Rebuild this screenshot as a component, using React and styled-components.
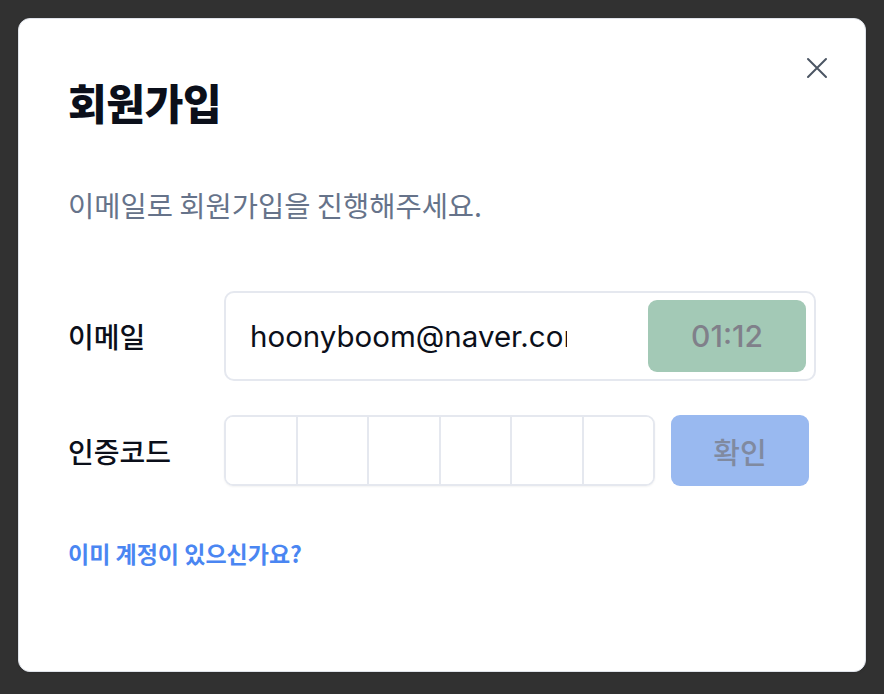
import React from 'react';
import styled, { createGlobalStyle } from 'styled-components';

const GlobalStyle = createGlobalStyle`
  html, body {
    margin: 0;
    padding: 0;
    background: #313131;
  }
  * {
    box-sizing: border-box;
  }
  body {
    font-family: Inter, "Noto Sans CJK KR", sans-serif;
  }
`;

const Backdrop = styled.div`
  min-height: 694px;
  padding: 18px;
`;

const Modal = styled.div`
  position: relative;
  width: 848px;
  height: 654px;
  background: #ffffff;
  border: 1px solid #dfe3ea;
  border-radius: 12px;
  padding: 57px 49px 0 49px;
  box-shadow: 0 1px 3px rgba(0, 0, 0, 0.08);
`;

const CloseButton = styled.button`
  position: absolute;
  top: 34px;
  right: 33px;
  width: 30px;
  height: 30px;
  padding: 0;
  border: none;
  background: transparent;
  display: flex;
  align-items: center;
  justify-content: center;
  cursor: pointer;
  color: #4b5563;
`;

const Title = styled.h2`
  margin: 0;
  font-family: "Noto Sans CJK KR", sans-serif;
  font-size: 42px;
  line-height: 52px;
  font-weight: 800;
  color: #0b0f1a;
  letter-spacing: -0.3px;
`;

const Subtitle = styled.p`
  margin: 59px 0 0;
  font-family: "Noto Sans CJK KR", sans-serif;
  font-size: 28.5px;
  line-height: 36px;
  font-weight: 400;
  color: #66738a;
`;

const Form = styled.div`
  margin-top: 68px;
  display: flex;
  flex-direction: column;
  gap: 34px;
`;

const Row = styled.div`
  display: flex;
  align-items: center;
`;

const Label = styled.label`
  width: 156px;
  flex: none;
  font-family: "Noto Sans CJK KR", sans-serif;
  font-size: 28px;
  font-weight: 500;
  color: #0b0f1a;
`;

const EmailBox = styled.div`
  width: 592px;
  height: 90px;
  display: flex;
  align-items: center;
  justify-content: space-between;
  border: 2px solid #e5e8ef;
  border-radius: 10px;
  padding: 8px 8px 8px 24px;
`;

const EmailInput = styled.input`
  width: 317px;
  border: none;
  outline: none;
  padding: 0;
  background: transparent;
  font-family: Inter, "Noto Sans CJK KR", sans-serif;
  font-size: 29.5px;
  color: #0b0f1a;
`;

const TimerButton = styled.button`
  width: 158px;
  height: 72px;
  border: none;
  border-radius: 9px;
  background: #a3c9b6;
  color: #80808a;
  font-family: Inter, sans-serif;
  font-size: 30px;
  font-weight: 500;
`;

const CodeGroup = styled.div`
  width: 431px;
  height: 71px;
  display: flex;
  border: 2px solid #e5e8ef;
  border-radius: 9px;
  overflow: hidden;
  box-shadow: 0 1px 2px rgba(0, 0, 0, 0.05);
`;

const CodeCell = styled.input`
  flex: 1;
  min-width: 0;
  border: none;
  border-right: ${p => (p.$last ? 'none' : '2px solid #e5e8ef')};
  outline: none;
  text-align: center;
  font-family: Inter, sans-serif;
  font-size: 28px;
  background: #fff;
`;

const ConfirmButton = styled.button`
  margin-left: 16px;
  width: 138px;
  height: 71px;
  border: none;
  border-radius: 9px;
  background: #99b9f0;
  color: #808aa0;
  font-family: "Noto Sans CJK KR", sans-serif;
  font-size: 29px;
  font-weight: 500;
`;

const LoginLink = styled.a`
  display: block;
  margin-top: 52px;
  font-family: "Noto Sans CJK KR", sans-serif;
  font-size: 23px;
  line-height: 30px;
  font-weight: 700;
  color: #4a86f2;
  text-decoration: none;
`;

const CloseIcon = () => (
  <svg width="22" height="22" viewBox="0 0 22 22" fill="none">
    <path d="M2 2L20 20M20 2L2 20" stroke="currentColor" strokeWidth="2" strokeLinecap="round" />
  </svg>
);

const App = () => {
  const cells = [0, 1, 2, 3, 4, 5];

  return (
    <>
      <GlobalStyle />
      <Backdrop>
        <Modal>
          <CloseButton aria-label="닫기">
            <CloseIcon />
          </CloseButton>

          <Title>회원가입</Title>
          <Subtitle>이메일로 회원가입을 진행해주세요.</Subtitle>

          <Form>
            <Row>
              <Label>이메일</Label>
              <EmailBox>
                <EmailInput readOnly value="hoonyboom@naver.com" />
                <TimerButton>01:12</TimerButton>
              </EmailBox>
            </Row>
            <Row>
              <Label>인증코드</Label>
              <CodeGroup>
                {cells.map(i => (
                  <CodeCell key={i} $last={i === cells.length - 1} maxLength={1} />
                ))}
              </CodeGroup>
              <ConfirmButton>확인</ConfirmButton>
            </Row>
          </Form>

          <LoginLink href="#">이미 계정이 있으신가요?</LoginLink>
        </Modal>
      </Backdrop>
    </>
  );
};

export default App;
